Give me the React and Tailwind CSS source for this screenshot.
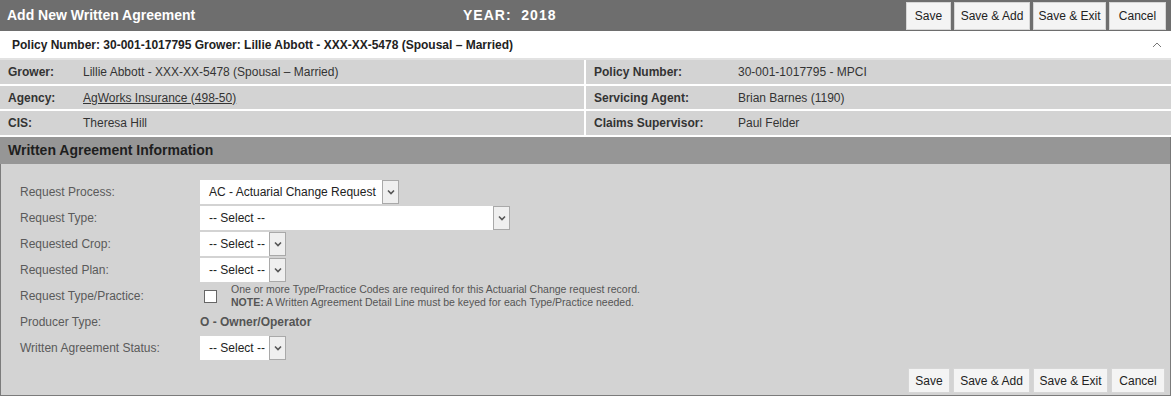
import React from 'react';

const font = { fontFamily: '"Liberation Sans", Arial, sans-serif' };

const topButtons = [
  ['Save', 'w-[45px]'],
  ['Save & Add', 'w-[76px]'],
  ['Save & Exit', 'w-[73px]'],
  ['Cancel', 'w-[57px]'],
];

const bottomButtons = [
  ['Save', 'w-[42px]'],
  ['Save & Add', 'w-[77px]'],
  ['Save & Exit', 'w-[75px]'],
  ['Cancel', 'w-[54px]'],
];

const ToolbarButtons = ({ tall }) => (
  <div className="flex gap-[3px]">
    {(tall ? topButtons : bottomButtons).map(([b, w]) => (
      <button
        key={b}
        className={`${tall ? 'h-[28px]' : 'h-[25px]'} ${w} bg-[#f4f4f4] border border-[#d6d6d6] text-[12px] text-[#222] leading-none whitespace-nowrap`}
      >
        {b}
      </button>
    ))}
  </div>
);

const Select = ({ value, width }) => (
  <div className={`flex h-[24px] ${width}`}>
    <div className="flex-1 bg-white flex items-center pl-[9px] text-[12px] text-[#222] whitespace-nowrap overflow-hidden">
      {value}
    </div>
    <div className="w-[17px] bg-[#efefef] border border-[#a9a9a9] flex items-center justify-center">
      <svg width="8" height="6" viewBox="0 0 8 6">
        <polyline points="1,1.5 4,4.5 7,1.5" fill="none" stroke="#555" strokeWidth="1.6" />
      </svg>
    </div>
  </div>
);

const InfoCell = ({ label, value, labelW, link }) => (
  <div className="bg-[#d3d3d3] flex items-center pl-[8px] text-[12px] text-[#333]">
    <span className={`${labelW} font-bold`}>{label}</span>
    <span className={link ? 'underline' : ''}>{value}</span>
  </div>
);

const FormRow = ({ label, children }) => (
  <div className="flex items-center h-[24px]">
    <div className="w-[180px] text-[12px] text-[#5a5a5a]">{label}</div>
    {children}
  </div>
);

export default function App() {
  return (
    <div className="w-[1171px] h-[396px] bg-white" style={font}>
      <div className="h-[31px] bg-[#6e6e6e] flex items-center pr-[5px]">
        <div className="w-[463px] pl-[7px] text-white font-bold text-[14px]">Add New Written Agreement</div>
        <div className="text-white font-bold text-[14px] tracking-[1px]">YEAR:&nbsp;&nbsp;2018</div>
        <div className="flex-1" />
        <ToolbarButtons tall />
      </div>

      <div className="h-[29px] border-b-2 border-[#e2e2e2] flex items-center justify-between pl-[12px] pr-[9px]">
        <span className="font-bold text-[12px] text-[#222]">
          Policy Number: 30-001-1017795 Grower: Lillie Abbott - XXX-XX-5478 (Spousal – Married)
        </span>
        <svg width="10" height="6" viewBox="0 0 10 6">
          <polyline points="1,5 5,1 9,5" fill="none" stroke="#777" strokeWidth="1" />
        </svg>
      </div>

      <div className="flex flex-col gap-[2px] bg-white pb-[2px]">
        <div className="grid grid-cols-[584px_1fr] gap-x-[2px] h-[24px]">
          <InfoCell label="Grower:" labelW="w-[75px]" value="Lillie Abbott - XXX-XX-5478 (Spousal – Married)" />
          <InfoCell label="Policy Number:" labelW="w-[144px]" value="30-001-1017795 - MPCI" />
        </div>
        <div className="grid grid-cols-[584px_1fr] gap-x-[2px] h-[23px]">
          <InfoCell label="Agency:" labelW="w-[75px]" value="AgWorks Insurance (498-50)" link />
          <InfoCell label="Servicing Agent:" labelW="w-[144px]" value="Brian Barnes (1190)" />
        </div>
        <div className="grid grid-cols-[584px_1fr] gap-x-[2px] h-[24px]">
          <InfoCell label="CIS:" labelW="w-[75px]" value="Theresa Hill" />
          <InfoCell label="Claims Supervisor:" labelW="w-[144px]" value="Paul Felder" />
        </div>
      </div>

      <div className="h-[27px] bg-[#969696] border-r border-[#777] flex items-center pl-[8px] font-bold text-[14px] text-[#1e1e1e]">
        Written Agreement Information
      </div>

      <div className="h-[232px] bg-[#d3d3d3] border-x border-b border-[#7b7b7b] flex flex-col">
        <div className="flex flex-col gap-[2px] pt-[16px] pl-[19px]">
          <FormRow label="Request Process:">
            <Select value="AC - Actuarial Change Request" width="w-[199px]" />
          </FormRow>
          <FormRow label="Request Type:">
            <Select value="-- Select --" width="w-[310px]" />
          </FormRow>
          <FormRow label="Requested Crop:">
            <Select value="-- Select --" width="w-[86px]" />
          </FormRow>
          <FormRow label="Requested Plan:">
            <Select value="-- Select --" width="w-[86px]" />
          </FormRow>
          <FormRow label="Request Type/Practice:">
            <div className="flex items-center">
              <div className="ml-[4px] w-[13px] h-[13px] bg-white border border-[#666]" />
              <div className="ml-[14px] text-[10.5px] leading-[13px] text-[#555]">
                <div>One or more Type/Practice Codes are required for this Actuarial Change request record.</div>
                <div><span className="font-bold">NOTE:</span> A Written Agreement Detail Line must be keyed for each Type/Practice needed.</div>
              </div>
            </div>
          </FormRow>
          <FormRow label="Producer Type:">
            <span className="font-bold text-[12px] text-[#555]">O - Owner/Operator</span>
          </FormRow>
          <FormRow label="Written Agreement Status:">
            <Select value="-- Select --" width="w-[86px]" />
          </FormRow>
        </div>
        <div className="flex-1" />
        <div className="flex justify-end pr-[5px] pb-[2px]">
          <ToolbarButtons />
        </div>
      </div>
    </div>
  );
}
